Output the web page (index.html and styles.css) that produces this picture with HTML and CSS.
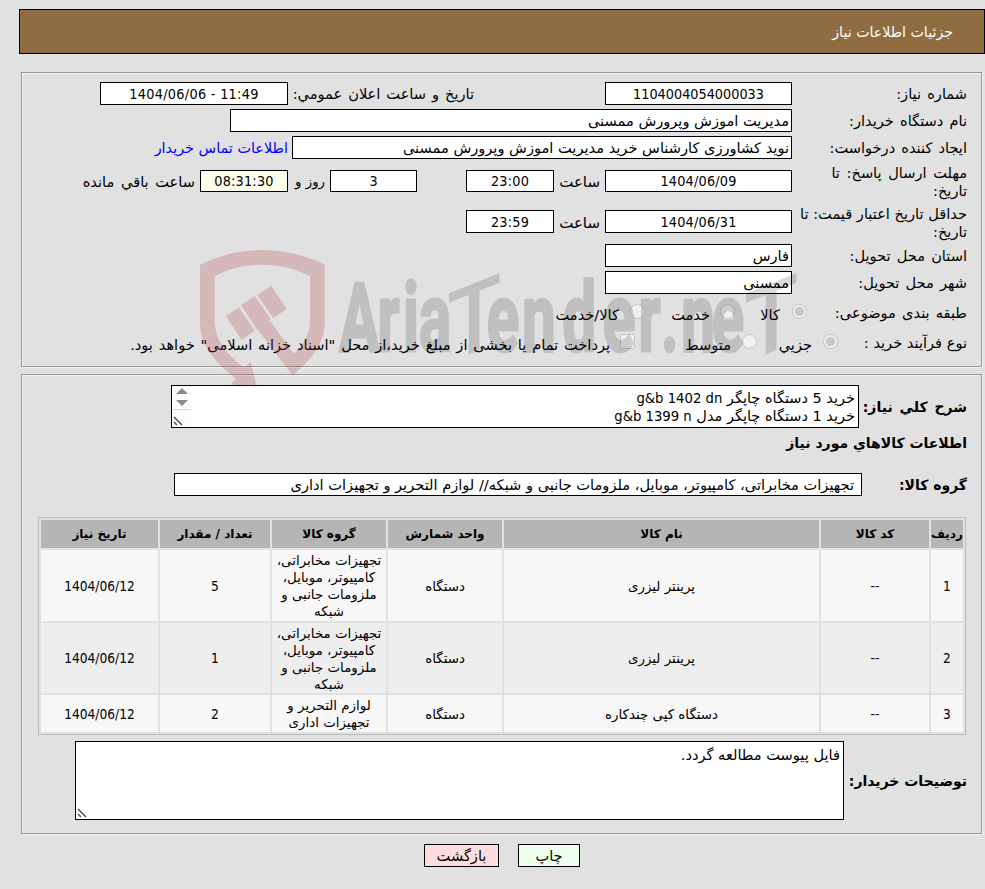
FILE: index.html
```html
<!DOCTYPE html>
<html lang="fa" dir="rtl">
<head>
    <meta charset="UTF-8">
    <title>جزئیات اطلاعات نیاز</title>
    <link rel="stylesheet" href="styles.css">
</head>
<body>
    <div class="page-title">جزئیات اطلاعات نیاز</div>

    <div class="panel need-info">
        <div class="row">
            <label class="name">شماره نیاز:</label>
            <div class="field num w-date">1104004054000033</div>
            <span class="text public-label">تاریخ و ساعت اعلان عمومي:</span>
            <div class="field num w-public" dir="ltr">1404/06/06 - 11:49</div>
        </div>
        <div class="row">
            <label class="name">نام دستگاه خریدار:</label>
            <div class="field w-org">مدیریت اموزش وپرورش ممسنی</div>
        </div>
        <div class="row">
            <label class="name">ایجاد کننده درخواست:</label>
            <div class="field w-creator">نوید کشاورزی کارشناس خرید مدیریت اموزش وپرورش ممسنی</div>
            <a class="contact">اطلاعات تماس خریدار</a>
        </div>
        <div class="row two-line deadline">
            <label class="name">مهلت ارسال پاسخ: تا<br>تاریخ:</label>
            <div class="field num date w-date">1404/06/09</div>
            <span class="text hour">ساعت</span>
            <div class="field num date w-time">23:00</div>
            <div class="field num w-days">3</div>
            <span class="text days">روز و</span>
            <div class="field num date w-left">08:31:30</div>
            <span class="text left-label">ساعت باقي مانده</span>
        </div>
        <div class="row two-line validity">
            <label class="name">حداقل تاریخ اعتبار قیمت: تا<br>تاریخ:</label>
            <div class="field num date w-date">1404/06/31</div>
            <span class="text hour">ساعت</span>
            <div class="field num date w-time">23:59</div>
        </div>
        <div class="row">
            <label class="name">استان محل تحویل:</label>
            <div class="field w-date">فارس</div>
        </div>
        <div class="row">
            <label class="name">شهر محل تحویل:</label>
            <div class="field w-date">ممسنی</div>
        </div>
        <div class="row options subject">
            <label class="name">طبقه بندی موضوعی:</label>
            <span class="radio on"></span><span class="opt opt-goods">کالا</span>
            <span class="radio"></span><span class="opt opt-service">خدمت</span>
            <span class="radio"></span><span class="opt opt-both">کالا/خدمت</span>
        </div>
        <div class="row options process">
            <label class="name">نوع فرآیند خرید :</label>
            <span class="radio on"></span><span class="opt opt-small">جزیي</span>
            <span class="radio"></span><span class="opt opt-medium">متوسط</span>
            <span class="check"></span><span class="opt opt-pay">پرداخت تمام یا بخشی از مبلغ خرید،از محل "اسناد خزانه اسلامی" خواهد بود.</span>
        </div>
    </div>

    <div class="panel goods-info">
        <div class="desc-row">
            <label class="bold">شرح کلي نیاز:</label>
            <div class="area area-desc">خرید 5 دستگاه چاپگر <span class="latin">g&amp;b 1402 dn</span><br>خرید 1 دستگاه چاپگر مدل <span class="latin">g&amp;b 1399 n</span>
                <div class="scroll">
                    <svg width="18" height="23" viewBox="0 0 18 23">
                        <path d="M9 2L15 8H3ZM9 20L15 14H3Z" fill="#8a8a8a"/>
                    </svg>
                </div>
                <svg class="grip" width="10" height="10" viewBox="0 0 10 10">
                    <path d="M1 1L9 9M1 6L4 9" stroke="#555" stroke-width="1.6" fill="none"/>
                </svg>
            </div>
        </div>
        <div class="bold goods-title">اطلاعات کالاهاي مورد نیاز</div>
        <div class="group-row">
            <label class="bold">گروه کالا:</label>
            <div class="field w-group">تجهیزات مخابراتی، کامپیوتر، موبایل، ملزومات جانبی و شبکه// لوازم التحریر و تجهیزات اداری</div>
        </div>
        <table>
            <colgroup>
                <col class="c-row"><col class="c-code"><col class="c-name"><col class="c-unit"><col class="c-group"><col class="c-count"><col class="c-date">
            </colgroup>
            <tr class="head">
                <th>ردیف</th>
                <th>کد کالا</th>
                <th>نام کالا</th>
                <th>واحد شمارش</th>
                <th>گروه کالا</th>
                <th>تعداد / مقدار</th>
                <th>تاریخ نیاز</th>
            </tr>
            <tr class="r1">
                <td class="n">1</td>
                <td class="n">--</td>
                <td>پرینتر لیزری</td>
                <td>دستگاه</td>
                <td>تجهیزات مخابراتی،<br>کامپیوتر، موبایل،<br>ملزومات جانبی و<br>شبکه</td>
                <td class="n">5</td>
                <td class="n">1404/06/12</td>
            </tr>
            <tr class="r2">
                <td class="n">2</td>
                <td class="n">--</td>
                <td>پرینتر لیزری</td>
                <td>دستگاه</td>
                <td>تجهیزات مخابراتی،<br>کامپیوتر، موبایل،<br>ملزومات جانبی و<br>شبکه</td>
                <td class="n">1</td>
                <td class="n">1404/06/12</td>
            </tr>
            <tr class="r3">
                <td class="n">3</td>
                <td class="n">--</td>
                <td>دستگاه کپی چندکاره</td>
                <td>دستگاه</td>
                <td>لوازم التحریر و<br>تجهیزات اداری</td>
                <td class="n">2</td>
                <td class="n">1404/06/12</td>
            </tr>
        </table>
        <div class="note-row">
            <label class="bold">توضیحات خریدار:</label>
            <div class="area area-note">فایل پیوست مطالعه گردد.
                <svg class="grip" width="10" height="10" viewBox="0 0 10 10">
                    <path d="M1 1L9 9M1 6L4 9" stroke="#555" stroke-width="1.6" fill="none"/>
                </svg>
            </div>
        </div>
    </div>

    <div class="buttons">
        <button class="print">چاپ</button>
        <button class="back">بازگشت</button>
    </div>

    <!-- site watermark -->
    <svg class="watermark" width="610" height="145" viewBox="195 245 610 145" direction="ltr">
        <g fill="#af2d30" fill-opacity=".22">
            <path d="M200 264.7Q230 250 262 250Q295 250 324.7 264.7V323C324.7 343 312 359 292.7 375.7L256.7 328.3L270 320.7L294 354Q310 338 310 323V276Q287 264.7 262 264.7Q237 264.7 214.7 276V320C214.7 340 226 353 244 367.7L250.7 362L256.7 386.7L230.7 384.3L236 379C212 360 200 343 200 323Z"/>
            <path d="M225.7 316L239 307.3L254.7 331L241.7 340Z"/>
            <path d="M241 305.3L254.7 296L271 319.3L256.7 329Z"/>
            <path d="M257.3 295L271.3 285.7L286.7 308.7L273.3 318.3Z"/>
        </g>
        <g class="wm-text">
            <text transform="translate(0 351) scale(.62 1)" x="547 609 650 676 785 842 907 972 1030 1066 1099 1148">Ariaender.ne</text>
            <text class="wm-t" transform="translate(447 363) scale(.92 1) skewY(-20)">T</text>
            <text class="wm-t" transform="translate(744 363) scale(.92 1) skewY(-20)">T</text>
        </g>
    </svg>
</body>
</html>
```
FILE: styles.css
```css
body {
    position: relative;
    margin: 0;
    padding: 9px 0 0 0;
    height: 880px;
    background-color: #e1e1e1;
    font-family: "DejaVu Sans", sans-serif;
    font-size: 14.6px;
    color: #000;
    overflow: hidden;
    white-space: nowrap;
}
div, span, label, a, button, table {
    box-sizing: border-box;
}
.page-title {
    margin-left: 19px;
    height: 45px;
    padding-right: 31px;
    border: 1px solid #000;
    background-color: #8f6d40;
    color: #fff;
    font-size: 14.2px;
    line-height: 44px;
}
.panel {
    width: 961px;
    margin-right: 3px;
    border: 1px solid #999;
    box-shadow: 1px 1px 0 #f2f2f2, inset 1px 1px 0 #f2f2f2;
}
.need-info {
    height: 295px;
    margin-top: 18px;
    padding: 9px 14px 0 0;
}
.row {
    display: flex;
    align-items: center;
    height: 23px;
    margin-bottom: 4px;
}
.name {
    width: 175px;
    flex: none;
    word-spacing: 1.5px;
}
.two-line {
    height: 34px;
    line-height: 18px;
}
.deadline {
    margin-top: 6px;
    margin-bottom: 6px;
}
.deadline .name {
    word-spacing: 2px;
}
.deadline .field {
    height: 22px;
    line-height: 21px;
    margin-bottom: 2px;
}
.validity {
    margin-top: 7px;
    margin-bottom: 4px;
}
.validity .name {
    word-spacing: 0;
}
.validity .field {
    margin-bottom: 3px;
}
.field {
    flex: none;
    height: 23px;
    padding: 0 2px;
    border: 1px solid #000;
    background-color: #fff;
    line-height: 22px;
}
.num {
    font-family: "DejaVu Sans Condensed", "DejaVu Sans", sans-serif;
    font-size: 14.3px;
    text-align: center;
}
.date {
    letter-spacing: .2px;
}
.text {
    flex: none;
}
.w-date { width: 187px; }
.w-public { width: 188px; letter-spacing: .3px; }
.w-org { width: 562px; }
.w-creator { width: 500px; }
.w-time { width: 88px; }
.w-days { width: 87px; margin-right: 49px; }
.w-left { width: 88px; background-color: #ffffee; }
.w-group { width: 688px; padding-right: 7px; }
.public-label { width: 186px; margin-right: 131px; word-spacing: 1.3px; }
.hour { width: 46px; margin-right: 5px; font-size: 15px; }
.days { width: 37px; margin-right: 5px; font-size: 13.3px; }
.left-label { margin-right: 5px; word-spacing: 2px; }
.contact {
    margin-right: 4px;
    font-size: 14.4px;
    color: #0000ff;
}
.options {
    margin-bottom: 0;
}
.subject {
    height: 30px;
}
.process {
    height: 30px;
}
.options .name {
    padding-bottom: 1px;
}
.radio, .check {
    flex: none;
    width: 15px;
    height: 15px;
    border: 1px solid #c6c6c6;
    background-color: #f0f0f0;
    margin-bottom: 3px;
}
.radio {
    border-radius: 50%;
}
.check {
    border-radius: 2px;
}
.radio.on {
    background: radial-gradient(circle, #c8c8c8 4.2px, #f0f0f0 5px);
}
.opt {
    flex: none;
    padding-top: 3px;
}
.subject .name { width: 160px; }
.process .name { width: 129px; word-spacing: 0; }
.opt-goods { width: 45px; margin-right: 12px; }
.opt-service { width: 65px; margin-right: 10px; }
.opt-both { margin-right: 11px; }
.opt-small { width: 55px; margin-right: 11px; }
.opt-medium { width: 96px; margin-right: 11px; }
.opt-pay { margin-right: 10px; word-spacing: 1.2px; }

.goods-info {
    height: 460px;
    margin-top: 7px;
    padding: 10px 14px 0 0;
}
.bold {
    flex: none;
    font-weight: bold;
    font-size: 14px;
}
.desc-row, .group-row, .note-row {
    display: flex;
    align-items: center;
}
.desc-row .bold { width: 108px; word-spacing: 2px; }
.group-row .bold { width: 105px; }
.note-row .bold { width: 123px; }
.area {
    position: relative;
    border: 1px solid #000;
    background-color: #fff;
    line-height: 18px;
    padding: 3px 3px 0 0;
}
.area-desc {
    width: 688px;
    height: 43px;
    font-size: 14.5px;
}
.latin {
    font-family: "DejaVu Sans Condensed", "DejaVu Sans", sans-serif;
    font-size: 14.7px;
    line-height: 1;
}
.area-note {
    width: 769px;
    height: 79px;
    padding-top: 4px;
}
.scroll {
    position: absolute;
    top: 0;
    left: 0;
    width: 19px;
    height: 41px;
    background-color: #fcfcfc;
}
.scroll svg {
    display: block;
    border-bottom: 1px solid #d5d5d5;
}
.grip {
    position: absolute;
    left: 1px;
    bottom: 1px;
}
.goods-title {
    height: 30px;
    line-height: 30px;
}
.group-row {
    margin-top: 15px;
}
table {
    width: 928px;
    margin: 21px 1px 0 0;
    border: 1px solid #bbb;
    border-spacing: 2px;
    table-layout: fixed;
    font-size: 13.4px;
    line-height: 17px;
}
th, td {
    padding: 0;
    text-align: center;
    background-color: #f7f7f7;
}
td {
    padding-top: 1px;
}
th {
    background-color: #b5b5b5;
    font-size: 12px;
}
.n {
    font-family: "DejaVu Sans Condensed", "DejaVu Sans", sans-serif;
    font-size: 13.6px;
}
.head { height: 28px; }
.r1 { height: 71px; }
.r2 { height: 70px; }
.r3 { height: 37px; }
.r2 td { background-color: #eee; }
.c-row { width: 32px; }
.c-code { width: 108px; }
.c-name { width: 315px; }
.c-unit { width: 114px; }
.c-group { width: 114px; }
.c-count { width: 110px; }
.c-date { width: 117px; }
.note-row {
    margin-top: 6px;
}
.buttons {
    display: flex;
    gap: 19px;
    padding-right: 405px;
    margin-top: 10px;
}
button {
    height: 23px;
    padding: 0;
    border: 1px solid #000;
    font-family: inherit;
    font-size: 14.6px;
    color: #000;
}
.print {
    width: 62px;
    background-color: #eeffee;
}
.back {
    width: 75px;
    background-color: #ffdddd;
}
.watermark {
    position: absolute;
    left: 195px;
    top: 245px;
    pointer-events: none;
}
.wm-text {
    font-family: Roboto, sans-serif;
    font-weight: bold;
    font-size: 97px;
    fill: #000;
    stroke: #000;
    stroke-width: 3;
    stroke-linejoin: round;
    opacity: .14;
}
.wm-t {
    stroke: none;
    font-weight: 500;
}
```
